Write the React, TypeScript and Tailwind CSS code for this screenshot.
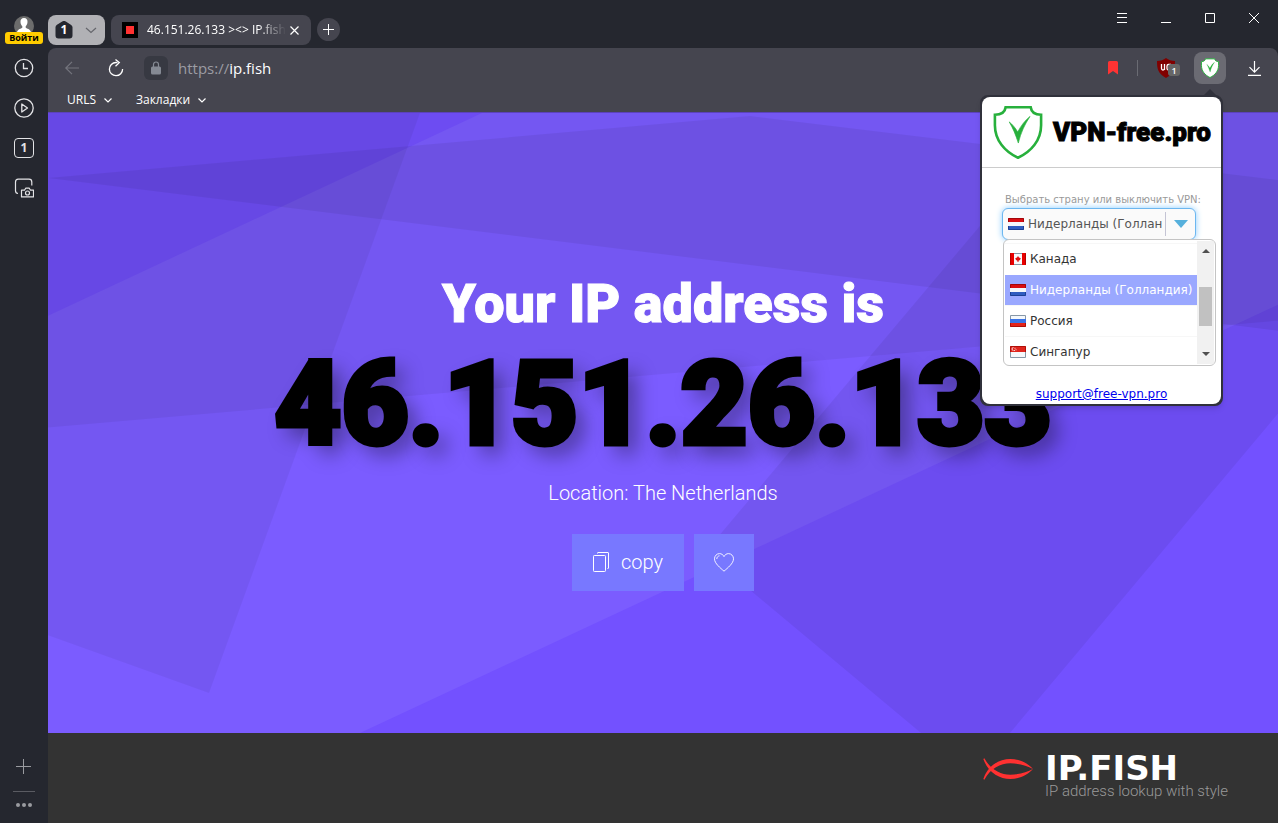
import React, { useState } from "react";

const countries = [
  { code: "ca", name: "Канада" },
  { code: "nl", name: "Нидерланды (Голландия)" },
  { code: "ru", name: "Россия" },
  { code: "sg", name: "Сингапур" },
];

const Flag = ({ code }: { code: string }) => (
  <svg width="16" height="12" viewBox="0 0 16 12" className="shrink-0" aria-hidden="true">
    {code === "nl" && (
      <>
        <rect width="16" height="12" rx="1" fill="#f4f6fa" />
        <path d="M0 4V1a1 1 0 0 1 1-1h14a1 1 0 0 1 1 1v3z" fill="#d90d12" />
        <path d="M0 8h16v3a1 1 0 0 1-1 1H1a1 1 0 0 1-1-1z" fill="#2f5cc0" />
        <path d="M.5 4V.5h15V4" fill="none" stroke="#a3060a" />
        <path d="M.5 8v3.5h15V8" fill="none" stroke="#1c3f94" />
      </>
    )}
    {code === "ru" && (
      <>
        <rect width="16" height="12" rx="1" fill="#f4f8fc" />
        <path d="M0 4h16v4H0z" fill="#3b74e6" />
        <path d="M0 8h16v3a1 1 0 0 1-1 1H1a1 1 0 0 1-1-1z" fill="#e32319" />
        <path d="M.5 4V.5h15V4" fill="none" stroke="#8797a6" />
        <path d="M.5 8v3.5h15V8" fill="none" stroke="#ad0f08" />
      </>
    )}
    {code === "ca" && (
      <>
        <rect x=".5" y=".5" width="15" height="11" fill="#f8fafc" stroke="#8797a6" />
        <path d="M0 0h4v12H0zM12 0h4v12h-4z" fill="#e80000" />
        <path d="M.5 .5v11M15.5 .5v11" stroke="#b50000" />
        <path d="M8 3l1 1.5 1.8.8-.8 1.8-1.5.6V9h-1V7.700L6 7.100l-.8-1.800L7 4.500z" fill="#e01010" />
      </>
    )}
    {code === "sg" && (
      <>
        <rect width="16" height="12" rx="1" fill="#f6f8fb" />
        <path d="M0 6V1a1 1 0 0 1 1-1h14a1 1 0 0 1 1 1v5z" fill="#e0251d" />
        <path d="M.5 6V.5h15V6" fill="none" stroke="#b01009" />
        <path d="M.5 6v5.500h15V6" fill="none" stroke="#8797a6" />
        <path d="M3.500 1.500a1.500 1.500 0 1 0 0 3M5 1.800v1M6 3.300v1M4.500 4v1" fill="none" stroke="#fff" strokeWidth=".8" />
      </>
    )}
  </svg>
);

const VpnShield = ({ size }: { size: number }) => (
  <svg width={size} height={size} viewBox="0 0 152 166" fill="none" className="shrink-0" aria-hidden="true">
    <path
      d="M38 7h77c2 15 14 23 32 23v32c0 46-30 81-71 100C35 143 5 108 5 62V30c18 0 31-8 33-23z"
      fill="#fff"
      stroke="#27b03c"
      strokeWidth="8"
    />
    <path d="M49 52c10 8 19 18 26 31 10-19 22-35 38-48-16 24-28 49-36 82-8-25-16-45-28-65z" fill="#27b03c" stroke="#27b03c" strokeWidth="2" />
  </svg>
);

const Fish = () => (
  <svg width="50" height="22" viewBox="0 0 150 64" fill="#ff3131" aria-hidden="true">
    <path d="M1 62C15 22 48 2 82 2c30 0 54 14 68 30-18-10-42-17-68-17C52 15 23 30 4 64z" />
    <path d="M1 2c14 40 47 60 81 60 30 0 54-14 68-30-18 10-42 17-68 17C52 49 23 34 4 0z" />
  </svg>
);

const Chevron = ({ className = "" }: { className?: string }) => (
  <svg width="8" height="5" viewBox="0 0 8 5" fill="none" stroke="currentColor" strokeWidth="1.200" className={className}>
    <path d="M.5.5L4 4 7.500.5" />
  </svg>
);

const Sidebar = () => (
  <aside className="flex w-12 shrink-0 flex-col items-center pb-4 pt-4 text-[#e3e3e6]">
    <button type="button" className="flex flex-col items-center">
      <svg width="20" height="16" viewBox="0 0 20 16" aria-hidden="true">
        <path d="M0 10a10 10 0 0 1 20 0 10 10 0 0 1-2 6H2a10 10 0 0 1-2-6z" fill="#6c6c6c" />
        <path d="M10 2c-2.500 0-3.700 1.800-3.500 4 .1 2 .9 3.400 1.800 4.300v1.500C7 12.800 4 13 3 16h14c-1-3-4-3.200-5.300-4.200v-1.500c.9-.9 1.700-2.300 1.800-4.300C13.700 3.800 12.500 2 10 2z" fill="#fff" />
      </svg>
      <span className="rounded-[3px] bg-[#ffcc00] px-1 text-[9px] font-bold leading-3 text-black">Войти</span>
    </button>
    <nav className="mt-3 flex flex-col items-center gap-5">
      <button type="button" aria-label="History" className="mt-0.5">
        <svg width="20" height="20" viewBox="0 0 20 20" fill="none" stroke="currentColor" strokeWidth="1.300">
          <circle cx="10" cy="10" r="8.700" />
          <path d="M9.500 5v5.500H14" />
        </svg>
      </button>
      <button type="button" aria-label="Play">
        <svg width="20" height="20" viewBox="0 0 20 20" fill="none" stroke="currentColor" strokeWidth="1.300">
          <circle cx="10" cy="10" r="9.200" />
          <path d="M7.800 6v8l5.700-4z" strokeLinejoin="round" />
        </svg>
      </button>
      <button type="button" className="flex size-5 items-center justify-center rounded-[4px] border border-[#e3e3e6] text-xs font-bold leading-none">
        1
      </button>
      <button type="button" aria-label="Screenshot">
        <svg width="20" height="20" viewBox="0 0 20 20" fill="none" stroke="currentColor" strokeWidth="1.200">
          <path d="M4 15.500c-1.800-.2-2.500-1-2.500-2.800V4C1.500 2 2.300 1.200 4.300 1.200H15c2 0 2.800.8 2.800 2.800v3.500" />
          <path d="M7.500 18.900V12.200h3l1.200-2h3.600l1.200 2h3v6.700z" strokeLinejoin="round" />
          <circle cx="13.500" cy="15" r="2" />
        </svg>
      </button>
    </nav>
    <div className="mt-auto flex flex-col items-center text-[#9a9ba0]">
      <button type="button" aria-label="Add">
        <svg width="16" height="16" viewBox="0 0 16 16" stroke="currentColor">
          <path d="M7.500 0v15M0 7.500h15" />
        </svg>
      </button>
      <div className="mt-4 h-px w-[22px] bg-[#5a5b62]" />
      <button type="button" aria-label="More" className="mt-[11px] flex gap-0.5">
        <span className="size-1 rounded-full bg-[#9a9ba0]" />
        <span className="size-1 rounded-full bg-[#9a9ba0]" />
        <span className="size-1 rounded-full bg-[#9a9ba0]" />
      </button>
    </div>
  </aside>
);

const TabBar = () => (
  <div className="flex h-12 items-end pb-[3px] text-white">
    <button type="button" className="flex h-[30px] w-[57px] items-center justify-between rounded-lg bg-[#b1b1b5] px-2">
      <span className="relative flex size-4 items-center justify-center text-xs font-bold leading-none text-white">
        <svg width="18" height="18" viewBox="0 0 18 18" className="absolute" aria-hidden="true">
          <path d="M7.200.6a3 3 0 0 1 3.600 0l5 3.200A3 3 0 0 1 17.500 6v8.500a3 3 0 0 1-3 3h-11a3 3 0 0 1-3-3V6a3 3 0 0 1 1.500-2.200z" fill="#25272f" />
        </svg>
        <span className="relative">1</span>
      </span>
      <svg width="12" height="7" viewBox="0 0 12 7" fill="none" stroke="#65666c" strokeWidth="1.200" aria-hidden="true">
        <path d="M1 1l5 4.500L11 1" />
      </svg>
    </button>
    <div className="ml-1.5 flex h-[30px] w-[200px] items-center rounded-lg bg-[#45454f] pl-[11px] pr-3">
      <svg width="16" height="16" viewBox="0 0 16 16" className="shrink-0" aria-hidden="true">
        <path d="M0 0h16v16H0z" fill="#000" />
        <path d="M4 4h8v8H4z" fill="#ff3131" />
      </svg>
      <span className="ml-[9px] flex-1 overflow-hidden whitespace-nowrap text-xs font-medium mask-[linear-gradient(to_right,#000_80%,transparent)]">
        46.151.26.133 &gt;&lt;&gt; IP.fish
      </span>
      <button type="button" aria-label="Close tab" className="ml-1">
        <svg width="9" height="9" viewBox="0 0 9 9" stroke="currentColor" strokeWidth="1.200">
          <path d="M.5.5l8 8M8.500.5l-8 8" />
        </svg>
      </button>
    </div>
    <button type="button" aria-label="New tab" className="mb-1 ml-1.5 flex size-[23px] items-center justify-center rounded-full bg-[#45454f]">
      <svg width="11" height="11" viewBox="0 0 11 11" stroke="currentColor">
        <path d="M5.500 0v11M0 5.500h11" />
      </svg>
    </button>
    <div className="ml-auto flex h-9 self-start pr-0.5">
      <button type="button" aria-label="Menu" className="flex w-11 items-center justify-center">
        <svg width="10" height="10" viewBox="0 0 10 10" stroke="currentColor">
          <path d="M0 .5h10M0 4.500h10M0 9.500h10" />
        </svg>
      </button>
      <button type="button" aria-label="Minimize" className="flex w-11 items-center justify-center">
        <svg width="10" height="10" viewBox="0 0 10 10" stroke="currentColor">
          <path d="M0 9.500h10" />
        </svg>
      </button>
      <button type="button" aria-label="Maximize" className="flex w-11 items-center justify-center">
        <svg width="10" height="10" viewBox="0 0 10 10" fill="none" stroke="currentColor">
          <path d="M.5.5h9v9h-9z" />
        </svg>
      </button>
      <button type="button" aria-label="Close" className="flex w-11 items-center justify-center">
        <svg width="10" height="10" viewBox="0 0 10 10" stroke="currentColor">
          <path d="M0 0l10 10M10 0L0 10" />
        </svg>
      </button>
    </div>
  </div>
);

const Toolbar = () => (
  <header className="rounded-t-lg bg-[#45454f] text-white">
    <div className="flex h-10 items-center pl-4 pr-[17px]">
      <button type="button" aria-label="Back" className="text-[#74757d]">
        <svg width="16" height="14" viewBox="0 0 16 14" fill="none" stroke="currentColor" strokeWidth="1.200">
          <path d="M15 7H2M8 .8L1.800 7 8 13.200" />
        </svg>
      </button>
      <button type="button" aria-label="Reload" className="ml-7">
        <svg width="16" height="18" viewBox="0 0 16 18" fill="none" stroke="currentColor" strokeWidth="1.300">
          <path d="M9.500 3.500H8A6.600 6.600 0 1 0 14.600 10" />
          <path d="M7.500.6l3.800 3-3.800 3.600" />
        </svg>
      </button>
      <button type="button" aria-label="Site security" className="ml-5 flex size-6 items-center justify-center rounded-md bg-[#373942]">
        <svg width="10" height="14" viewBox="0 0 10 14" aria-hidden="true">
          <path d="M2.500 6V3.500a2.500 2.500 0 0 1 5 0V6" fill="none" stroke="#858a94" strokeWidth="1.200" />
          <rect y="5.500" width="10" height="8" rx="1.500" fill="#858a94" />
        </svg>
      </button>
      <span className="ml-2.5 text-[15px]">
        <span className="text-[#9c9ca3]">https://</span>ip.fish
      </span>
      <button type="button" aria-label="Bookmark" className="ml-auto">
        <svg width="10" height="14" viewBox="0 0 10 14" fill="#ff3333">
          <path d="M0 1.500A1.500 1.500 0 0 1 1.500 0h7A1.500 1.500 0 0 1 10 1.500V13.500L5 10l-5 3.500z" />
        </svg>
      </button>
      <span className="ml-[19px] h-4 w-px bg-[#6a6b73]" />
      <button type="button" aria-label="uBlock Origin" className="relative ml-[19px]">
        <svg width="18" height="20" viewBox="0 0 18 20" aria-hidden="true">
          <path d="M9 0c2.500 2 5.500 3 9 3 0 8-1 12.500-9 17C1 15.500 0 11 0 3c3.500 0 6.500-1 9-3z" fill="#800000" />
          <path d="M4.500 6v4.500a1.500 1.500 0 0 0 3 0V6v6M14 6.500h-2.500a1.500 1.500 0 0 0-1.500 1.500v2.500a1.500 1.500 0 0 0 1.500 1.500H14" fill="none" stroke="#fff" strokeWidth="1.300" />
        </svg>
        <span className="absolute -right-[5px] bottom-0.5 flex h-3 w-3 items-center justify-center rounded-[3px] bg-[#666] text-[9px] font-semibold leading-none">1</span>
      </button>
      <button type="button" aria-label="VPN-free.pro" className="ml-[19px] flex size-8 items-center justify-center rounded-lg bg-[#6b6b73]">
        <VpnShield size={20} />
      </button>
      <button type="button" aria-label="Downloads" className="ml-[22px]">
        <svg width="13" height="16" viewBox="0 0 13 16" fill="none" stroke="currentColor" strokeWidth="1.200">
          <path d="M6.500 1v11M1.500 7.200l5 5 5-5M0 15.300h13" />
        </svg>
      </button>
    </div>
    <div className="flex h-6 gap-6 pl-[19px] text-xs font-medium">
      <button type="button" className="flex items-center gap-2">
        URLS <Chevron />
      </button>
      <button type="button" className="flex items-center gap-2">
        Закладки <Chevron />
      </button>
    </div>
  </header>
);

const HeroBackground = () => (
  <svg viewBox="0 0 1230 621" preserveAspectRatio="none" className="absolute inset-0 size-full" aria-hidden="true">
    <path d="M0 0h1230v621H0z" fill="#7b5cff" />
    <path d="M0 0h434L0 203zM312 621l918-429v429z" fill="#5b30ff" fillOpacity=".25" />
    <path d="M0 0h372L161 581 0 523z" fillOpacity=".05" />
    <path d="M0 0h1230v208L0 315z" fillOpacity=".05" />
    <path d="M0 65L702 3l528 64v151z" fillOpacity=".06" />
    <path d="M657 440l370-440h203v301L962 621h-89z" fillOpacity=".06" />
  </svg>
);

const Hero = () => (
  <main className="relative flex flex-1 flex-col items-center justify-center overflow-hidden border-t border-[#5c42bd] pt-2 font-['Roboto',sans-serif] text-white">
    <HeroBackground />
    <h1 className="relative text-center font-black">
      <span className="block text-[54px] leading-[80px] [-webkit-text-stroke:1px_white]">Your IP address is</span>
      <span className="block text-[116px] leading-[120px] text-black [-webkit-text-stroke:5px_black] [text-shadow:10px_10px_20px_rgba(0,0,0,0.4)]">46.151.26.133</span>
    </h1>
    <p className="relative mt-3.5 text-xl leading-[30px] font-light">Location: The Netherlands</p>
    <div className="relative mt-[26px] flex gap-2.5">
      <button type="button" className="flex h-[57px] w-28 items-center justify-center gap-3 bg-[#7878ff] text-xl font-light">
        <svg width="16" height="20" viewBox="0 0 16 20" fill="none" stroke="currentColor">
          <rect x=".5" y="3.500" width="12" height="16" rx=".8" />
          <path d="M4.500 1.500V1a.5.500 0 0 1 .5-.5h10a.5.500 0 0 1 .5.500v15a.5.500 0 0 1-.5.500h-.5" />
        </svg>
        copy
      </button>
      <button type="button" aria-label="Donate" className="flex h-[57px] w-[60px] items-center justify-center bg-[#7878ff]">
        <svg width="20" height="19" viewBox="0 0 20 19" fill="none" stroke="currentColor" strokeWidth=".9">
          <path d="M10 18.200C6.500 15 .5 10.500.5 5.800.5 3 2.700.6 5.500.6 7.500.6 9.200 1.800 10 3.600 10.800 1.800 12.500.6 14.500.6c2.800 0 5 2.400 5 5.200 0 4.700-6 9.200-9.500 12.400z" />
          <path d="M2.800 6c0-1.800 1.100-3 2.700-3.200" />
        </svg>
      </button>
    </div>
  </main>
);

const Footer = () => (
  <footer className="flex h-[90px] shrink-0 items-start justify-end gap-3 bg-[#333] pr-[50px] pt-[21px] font-['Roboto',sans-serif]">
    <div className="pt-1">
      <Fish />
    </div>
    <div>
      <div className="font-['DejaVu_Sans',sans-serif] text-[34px] leading-7 font-bold text-white">IP.FISH</div>
      <div className="text-[15px] leading-[18px] font-light text-[#999]">IP address lookup with style</div>
    </div>
  </footer>
);

const VpnPopup = () => {
  const [selected, setSelected] = useState("nl");

  return (
    <div className="absolute right-[55px] top-[95px] w-[243px] rounded-lg border-2 border-[#30313b] bg-[#30313b] font-['DejaVu_Sans',sans-serif] shadow-md">
      <svg width="14" height="7" viewBox="0 0 14 7" className="absolute -top-2 right-[4px]" aria-hidden="true">
        <path d="M0 7l7-7 7 7z" fill="#30313b" />
      </svg>
      <div className="rounded-lg bg-white pb-0.5">
        <div className="flex h-[71px] items-center gap-2 border-b border-[#ccc] pl-[9px]">
          <VpnShield size={54} />
          <span className="whitespace-nowrap font-['Roboto',sans-serif] text-[26px] font-black leading-none text-black [-webkit-text-stroke:1px_black]">VPN-free.pro</span>
        </div>
        <div className="px-5 pt-6">
          <label htmlFor="country" className="block whitespace-nowrap pl-[3px] text-[10px] leading-4 text-[#999]">
            Выбрать страну или выключить VPN:
          </label>
          <div className="relative flex h-8 w-[194px] items-center rounded-md border border-[#6cb7f0] bg-[#fafafa] pl-[5px] shadow-[0_0_6px_#8ccdff]">
            <Flag code={selected} />
            <select
              id="country"
              value={selected}
              onChange={(e) => setSelected(e.target.value)}
              className="ml-1 w-[134px] appearance-none overflow-hidden bg-transparent text-xs text-[#555] focus:outline-none"
            >
              {countries.map((c) => (
                <option key={c.code} value={c.code}>{c.name}</option>
              ))}
            </select>
            <span className="ml-[3px] h-6 w-px bg-[#c4c4d4]" />
            <svg width="14" height="8" viewBox="0 0 14 8" fill="#56b0dc" className="ml-2" aria-hidden="true">
              <path d="M0 0h14L7 8z" />
            </svg>
          </div>
          <div className="relative -mt-px ml-px flex h-[127px] w-[213px] overflow-hidden rounded-md border border-[#c4c4c4] bg-white p-px">
            <ul className="flex-1 overflow-hidden pt-0.5 text-xs text-[#333]">
              {countries.map((c) => (
                <li key={c.code}>
                  <button
                    type="button"
                    onClick={() => setSelected(c.code)}
                    className={
                      c.code === selected
                        ? "flex h-[31px] w-full items-center gap-1 whitespace-nowrap border-t border-white bg-[#9aa8ff] pl-[5px] text-white"
                        : "flex h-[31px] w-full items-center gap-1 whitespace-nowrap border-t border-[#f7f7f7] pl-[5px]"
                    }
                  >
                    <Flag code={c.code} />
                    {c.name}
                  </button>
                </li>
              ))}
            </ul>
            <div className="flex w-[17px] flex-col items-center bg-[#f1f1f1] py-2">
              <svg width="8" height="4" viewBox="0 0 8 4" fill="#505050" aria-hidden="true">
                <path d="M0 4l4-4 4 4z" />
              </svg>
              <div className="mt-[34px] h-[39px] w-[13px] bg-[#c1c1c1]" />
              <svg width="8" height="4" viewBox="0 0 8 4" fill="#505050" className="mt-auto" aria-hidden="true">
                <path d="M0 0h8L4 4z" />
              </svg>
            </div>
          </div>
          <a href="mailto:support@free-vpn.pro" className="mt-5 block text-center text-xs leading-4 text-[#0000ee] underline">
            support@free-vpn.pro
          </a>
        </div>
      </div>
    </div>
  );
};

const App = () => (
  <div className="relative flex min-h-screen bg-[#25272f] font-['Open_Sans',sans-serif]">
    <Sidebar />
    <div className="flex min-w-0 flex-1 flex-col">
      <TabBar />
      <Toolbar />
      <Hero />
      <Footer />
    </div>
    <VpnPopup />
  </div>
);

export default App;
